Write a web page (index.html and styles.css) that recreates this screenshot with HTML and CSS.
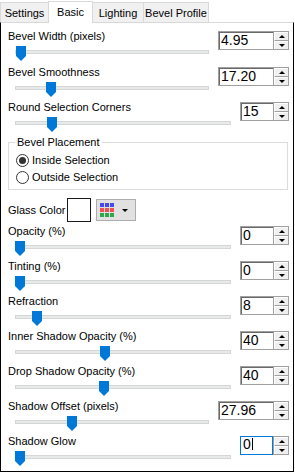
FILE: index.html
```html
<!DOCTYPE html>
<html>
<head>
<meta charset="utf-8">
<link rel="stylesheet" href="styles.css">
</head>
<body>
<div class="tabs">
  <div class="tab tab-settings">Settings</div>
  <div class="tab tab-basic active">Basic</div>
  <div class="tab tab-lighting">Lighting</div>
  <div class="tab tab-profile">Bevel Profile</div>
</div>
<div class="panel">
  <div class="section first">
    <div class="row">
      <div class="label">Bevel Width (pixels)</div>
      <div class="spin"><div class="spin-edit">4.95</div><div class="spin-btns"><div class="spin-btn"><span class="arr-up"></span></div><div class="spin-btn"><span class="arr-down"></span></div></div></div>
      <div class="slider"><div class="track"></div><div class="thumb" style="left:8px"></div></div>
    </div>
    <div class="row">
      <div class="label">Bevel Smoothness</div>
      <div class="spin"><div class="spin-edit">17.20</div><div class="spin-btns"><div class="spin-btn"><span class="arr-up"></span></div><div class="spin-btn"><span class="arr-down"></span></div></div></div>
      <div class="slider"><div class="track"></div><div class="thumb" style="left:38px"></div></div>
    </div>
    <div class="row">
      <div class="label">Round Selection Corners</div>
      <div class="spin narrow"><div class="spin-edit">15</div><div class="spin-btns"><div class="spin-btn"><span class="arr-up"></span></div><div class="spin-btn"><span class="arr-down"></span></div></div></div>
      <div class="slider"><div class="track"></div><div class="thumb" style="left:39px"></div></div>
    </div>
  </div>

  <fieldset class="group">
    <legend>Bevel Placement</legend>
    <div class="radio"><span class="radio-circle checked"></span><span>Inside Selection</span></div>
    <div class="radio"><span class="radio-circle"></span><span>Outside Selection</span></div>
  </fieldset>

  <div class="glass">
    <div class="glass-label">Glass Color</div>
    <div class="color-box"></div>
    <div class="color-btn">
      <div class="swatch-grid">
        <span class="cell blue"></span><span class="cell blue"></span><span class="cell blue"></span>
        <span class="cell red"></span><span class="cell red"></span><span class="cell red"></span>
        <span class="cell green"></span><span class="cell green"></span><span class="cell green"></span>
      </div>
      <span class="arr-down"></span>
    </div>
  </div>

  <div class="section second">
    <div class="row">
      <div class="label">Opacity (%)</div>
      <div class="spin narrow"><div class="spin-edit">0</div><div class="spin-btns"><div class="spin-btn"><span class="arr-up"></span></div><div class="spin-btn"><span class="arr-down"></span></div></div></div>
      <div class="slider"><div class="track"></div><div class="thumb" style="left:7px"></div></div>
    </div>
    <div class="row">
      <div class="label">Tinting (%)</div>
      <div class="spin narrow"><div class="spin-edit">0</div><div class="spin-btns"><div class="spin-btn"><span class="arr-up"></span></div><div class="spin-btn"><span class="arr-down"></span></div></div></div>
      <div class="slider"><div class="track"></div><div class="thumb" style="left:7px"></div></div>
    </div>
    <div class="row">
      <div class="label">Refraction</div>
      <div class="spin narrow"><div class="spin-edit">8</div><div class="spin-btns"><div class="spin-btn"><span class="arr-up"></span></div><div class="spin-btn"><span class="arr-down"></span></div></div></div>
      <div class="slider"><div class="track"></div><div class="thumb" style="left:24px"></div></div>
    </div>
    <div class="row">
      <div class="label">Inner Shadow Opacity (%)</div>
      <div class="spin narrow"><div class="spin-edit">40</div><div class="spin-btns"><div class="spin-btn"><span class="arr-up"></span></div><div class="spin-btn"><span class="arr-down"></span></div></div></div>
      <div class="slider"><div class="track"></div><div class="thumb" style="left:92px"></div></div>
    </div>
    <div class="row">
      <div class="label">Drop Shadow Opacity (%)</div>
      <div class="spin narrow"><div class="spin-edit">40</div><div class="spin-btns"><div class="spin-btn"><span class="arr-up"></span></div><div class="spin-btn"><span class="arr-down"></span></div></div></div>
      <div class="slider"><div class="track"></div><div class="thumb" style="left:91px"></div></div>
    </div>
    <div class="row">
      <div class="label">Shadow Offset (pixels)</div>
      <div class="spin"><div class="spin-edit">27.96</div><div class="spin-btns"><div class="spin-btn"><span class="arr-up"></span></div><div class="spin-btn"><span class="arr-down"></span></div></div></div>
      <div class="slider"><div class="track"></div><div class="thumb" style="left:59px"></div></div>
    </div>
    <div class="row">
      <div class="label">Shadow Glow</div>
      <div class="spin narrow focus"><div class="spin-edit">0<span class="caret"></span></div><div class="spin-btns"><div class="spin-btn"><span class="arr-up"></span></div><div class="spin-btn"><span class="arr-down"></span></div></div></div>
      <div class="slider"><div class="track"></div><div class="thumb" style="left:7px"></div></div>
    </div>
  </div>
</div>
</body>
</html>
```
FILE: styles.css
```css
* { box-sizing: border-box; }
html, body { margin: 0; padding: 0; background: #fff; }
body {
  font-family: "Liberation Sans", Arial, sans-serif;
  font-size: 11px;
  line-height: 13px;
  color: #000;
  width: 295px;
  height: 473px;
  overflow: hidden;
}

/* tabs */
.tabs {
  display: flex;
  align-items: flex-end;
  height: 22px;
  position: relative;
  z-index: 1;
}
.tab {
  height: 20px;
  padding-top: 4px;
  border: 1px solid #d9d9d9;
  border-bottom: none;
  background: #f0f0f0;
  text-align: center;
  white-space: nowrap;
  margin-left: -1px;
}
.tab-settings { width: 49px; margin-left: 0; }
.tab-basic { width: 45px; }
.tab-lighting { width: 52px; }
.tab-profile { width: 66px; }
.tab.active {
  height: 22px;
  margin-bottom: -1px;
  background: #fff;
  position: relative;
  z-index: 1;
}

/* panel */
.panel {
  width: 294px;
  height: 450px;
  border: 1px solid #000;
  border-top-color: #d9d9d9;
  padding: 7px 4px 0 7px;
}

.section {
  display: flex;
  flex-direction: column;
  gap: 5px;
}
.section.first .row:first-child { margin-bottom: 1px; }
.section.second { margin-top: 3px; }

.row {
  display: grid;
  grid-template-columns: 1fr auto;
  grid-template-rows: 13px 17px;
  column-gap: 8px;
}
.label {
  grid-column: 1;
  grid-row: 1;
  white-space: nowrap;
}
.slider {
  grid-column: 1;
  grid-row: 2;
  position: relative;
  padding: 7px 1px 0 7px;
}
.track {
  height: 4px;
  background: #e7eaea;
  border: 1px solid #d6d6d6;
}
.thumb {
  position: absolute;
  top: 3px;
  width: 10px;
  height: 15px;
  background: #0078d7;
  clip-path: polygon(0 0, 100% 0, 100% 10px, 50% 100%, 0 10px);
}

/* spin box */
.spin {
  grid-column: 2;
  grid-row: 1 / 3;
  align-self: start;
  margin-top: 1px;
  width: 71px;
  height: 19px;
  display: flex;
  border: 1px solid #a0a0a0;
  background: #fff;
}
.spin.narrow { width: 49px; }
.spin-edit {
  flex: 1;
  border-top: 1px solid #696969;
  border-left: 1px solid #696969;
  padding-left: 1px;
  font-size: 14px;
  line-height: 14px;
  display: flex;
  align-items: flex-start;
}
.spin.focus .spin-edit {
  border: 1px solid #0078d7;
  margin: -1px 0 -1px -1px;
  padding-left: 2px;
}
.caret {
  display: inline-block;
  width: 1px;
  height: 12px;
  margin-top: 1px;
  margin-left: 1px;
  background: #000;
}
.spin-btns {
  width: 15px;
  display: flex;
  flex-direction: column;
  border-left: 1px solid #a0a0a0;
}
.spin-btn {
  flex: 1;
  background: #f0f0f0;
  border-top: 1px solid #fff;
  border-left: 1px solid #fff;
  border-bottom: 1px solid #a0a0a0;
  display: flex;
  align-items: center;
  justify-content: center;
}
.spin-btn:last-child { border-bottom: none; }
.arr-up {
  width: 0;
  height: 0;
  border-left: 3px solid transparent;
  border-right: 3px solid transparent;
  border-bottom: 3px solid #000;
}
.arr-down {
  width: 0;
  height: 0;
  border-left: 3px solid transparent;
  border-right: 3px solid transparent;
  border-top: 3px solid #000;
}

/* group box */
.group {
  margin: 5px 1px 0 0;
  padding: 4px 0 5px 6px;
  border: 1px solid #dcdcdc;
  min-width: 0;
}
.group legend {
  padding: 0 2px;
  line-height: 13px;
}
.radio {
  display: flex;
  align-items: center;
  gap: 3px;
  height: 14px;
  margin-left: 1px;
}
.radio + .radio { margin-top: 3px; }
.radio-circle {
  width: 13px;
  height: 13px;
  border: 1px solid #333;
  border-radius: 50%;
  background: #fff;
  display: flex;
  align-items: center;
  justify-content: center;
}
.radio-circle.checked::after {
  content: "";
  width: 7px;
  height: 7px;
  border-radius: 50%;
  background: #333;
}

/* glass color */
.glass {
  margin-top: 8px;
  height: 24px;
  display: flex;
  align-items: center;
}
.glass-label { width: 59px; white-space: nowrap; }
.color-box {
  width: 24px;
  height: 24px;
  border: 1px solid #1a1a1a;
  background: #fff;
}
.color-btn {
  margin-left: 5px;
  width: 40px;
  height: 22px;
  background: #e1e1e1;
  border: 1px solid #adadad;
  display: flex;
  align-items: center;
  padding-left: 3px;
  gap: 8px;
}
.swatch-grid {
  display: grid;
  grid-template-columns: repeat(3, 4px);
  grid-auto-rows: 4px;
  gap: 1px;
}
.cell.blue { background: #4848f0; }
.cell.red { background: #f05050; }
.cell.green { background: #2ea84a; }
```
